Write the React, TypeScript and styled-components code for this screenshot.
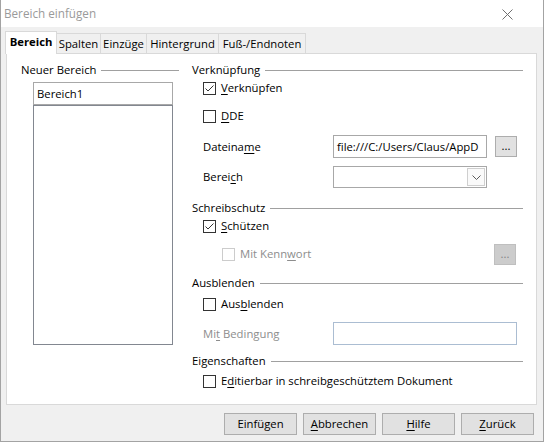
import React from "react";
import styled, { createGlobalStyle, css } from "styled-components";

const GlobalStyle = createGlobalStyle`
  html, body { margin: 0; padding: 0; background: #ffffff; }
  body {
    font-family: "Segoe UI", "Open Sans", sans-serif;
    font-size: 11.3px;
    color: #000;
  }
  * { box-sizing: border-box; }
`;

const Window = styled.div`
  width: 544px;
  height: 442px;
  border-left: 1px solid #a3a3a3;
  border-right: 1px solid #a3a3a3;
  border-bottom: 1px solid #a3a3a3;
  display: flex;
  flex-direction: column;
  background: #fff;
`;

const TitleBar = styled.div`
  height: 27px;
  display: flex;
  align-items: flex-start;
  justify-content: space-between;
  padding: 5px 30px 0 3px;
  background: #fff;
`;

const TitleText = styled.span`
  font-size: 11.7px;
  line-height: 16px;
  color: #9a9a9a;
`;

const CloseIcon = styled.svg`
  margin-top: 4px;
  display: block;
`;

const Body = styled.div`
  flex: 1;
  background: #f0f0f0;
  padding: 4px 0 0 5px;
  display: flex;
  flex-direction: column;
`;

const TabBar = styled.div`
  display: flex;
  align-items: flex-end;
  height: 23px;
  margin-left: -1px;
  margin-bottom: -1px;
  position: relative;
  z-index: 1;
`;

const Tab = styled.div<{ $active?: boolean; $w: number }>`
  width: ${(p) => p.$w}px;
  height: ${(p) => (p.$active ? 23 : 21)}px;
  margin-left: -1px;
  &:first-child { margin-left: 0; }
  display: flex;
  align-items: center;
  justify-content: center;
  border: 1px solid #d9d9d9;
  line-height: 16px;
  white-space: nowrap;
  ${(p) =>
    p.$active
      ? css`
          background: #fff;
          border-bottom: none;
          font-weight: bold;
          padding-bottom: 2px;
          position: relative;
          z-index: 2;
        `
      : css`
          background: #f0f0f0;
          padding-top: 1px;
        `}
`;

const Pane = styled.div`
  width: 531px;
  height: 352px;
  border: 1px solid #d9d9d9;
  background: #fff;
  display: flex;
  padding: 8px 0 0 14px;
`;

const LeftColumn = styled.div`
  width: 158px;
  display: flex;
  flex-direction: column;
`;

const RightColumn = styled.div`
  width: 331px;
  margin-left: 13px;
  display: flex;
  flex-direction: column;
`;

const SectionHeader = styled.div<{ $mt?: number }>`
  height: 16px;
  margin-top: ${(p) => p.$mt ?? 0}px;
  display: flex;
  align-items: center;
  gap: 5px;
  white-space: nowrap;
  line-height: 16px;
`;

const HeaderLine = styled.div`
  flex: 1;
  height: 1px;
  background: #a0a0a0;
`;

const NameInput = styled.div`
  margin: 4px 0 0 12px;
  width: 140px;
  height: 23px;
  border: 1px solid #a8a8a8;
  padding: 0 3px;
  display: flex;
  align-items: center;
  line-height: 16px;
`;

const ListBox = styled.div`
  margin-left: 12px;
  width: 140px;
  height: 240px;
  border: 1px solid #828790;
  background: #fff;
`;

const CheckRow = styled.div<{ $mt?: number; $indent?: number; $h?: number; $pr?: number }>`
  height: ${(p) => p.$h ?? 16}px;
  margin-top: ${(p) => p.$mt ?? 0}px;
  padding-left: ${(p) => p.$indent ?? 11}px;
  padding-right: ${(p) => p.$pr ?? 0}px;
  display: flex;
  align-items: center;
  line-height: 16px;
  white-space: nowrap;
`;

const Box = styled.span<{ $disabled?: boolean }>`
  width: 13px;
  height: 13px;
  border: 1px solid ${(p) => (p.$disabled ? "#cccccc" : "#333333")};
  background: #fff;
  display: inline-flex;
  align-items: center;
  justify-content: center;
  flex: none;
  margin-right: 5px;
`;

const Label = styled.span<{ $disabled?: boolean; $w?: number }>`
  color: ${(p) => (p.$disabled ? "#8d8d8d" : "#000")};
  ${(p) => (p.$w ? `width: ${p.$w}px; flex: none;` : "")}
`;

const Mn = styled.span`
  text-decoration: underline;
  text-underline-offset: 2px;
`;

const FieldRow = styled.div<{ $mt?: number; $h: number }>`
  height: ${(p) => p.$h}px;
  margin-top: ${(p) => p.$mt ?? 0}px;
  padding-left: 11px;
  display: flex;
  align-items: center;
  line-height: 16px;
  white-space: nowrap;
`;

const TextField = styled.div<{ $w: number; $h: number; $tone?: "normal" | "disabled" }>`
  width: ${(p) => p.$w}px;
  height: ${(p) => p.$h}px;
  border: 1px solid ${(p) => (p.$tone === "disabled" ? "#abbdd2" : "#a8a8a8")};
  background: #fff;
  padding: 0 3px;
  display: flex;
  align-items: center;
  overflow: hidden;
  white-space: nowrap;
  flex: none;
`;

const Select = styled.div`
  width: 154px;
  height: 22px;
  border: 1px solid #a8a8a8;
  background: #fff;
  display: flex;
  justify-content: flex-end;
  align-items: center;
  padding-right: 1px;
  flex: none;
`;

const SelectArrow = styled.div`
  width: 18px;
  height: 18px;
  border: 1px solid #cfcfcf;
  background: #fafafa;
  display: flex;
  align-items: center;
  justify-content: center;
`;

const SmallButton = styled.div<{ $disabled?: boolean; $ml?: number }>`
  width: 22px;
  height: 21px;
  margin-left: ${(p) => p.$ml ?? 0}px;
  border: 1px solid ${(p) => (p.$disabled ? "#bfbfbf" : "#adadad")};
  background: ${(p) => (p.$disabled ? "#cccccc" : "#e1e1e1")};
  color: ${(p) => (p.$disabled ? "#838383" : "#000")};
  display: flex;
  align-items: center;
  justify-content: center;
  padding-bottom: 1px;
  line-height: 16px;
  flex: none;
`;

const Spacer = styled.div`
  flex: 1;
`;

const ButtonRow = styled.div`
  display: flex;
  justify-content: flex-end;
  gap: 6px;
  margin-top: 8px;
  padding-right: 9px;
`;

const DialogButton = styled.div`
  width: 73px;
  height: 22px;
  border: 1px solid #adadad;
  background: #e1e1e1;
  display: flex;
  align-items: center;
  justify-content: center;
  line-height: 16px;
`;

const Check = () => (
  <svg width="11" height="11" viewBox="0 0 11 11">
    <polyline points="1.5,5.5 4,8 9.5,2.5" fill="none" stroke="#333" strokeWidth="1" />
  </svg>
);

const CheckBox: React.FC<{ checked?: boolean; disabled?: boolean }> = ({ checked, disabled }) => (
  <Box $disabled={disabled}>{checked && <Check />}</Box>
);

export default function App() {
  return (
    <>
      <GlobalStyle />
      <Window>
        <TitleBar>
          <TitleText>Bereich einfügen</TitleText>
          <CloseIcon width="11" height="11" viewBox="0 0 11 11">
            <line x1="0.5" y1="0.5" x2="10.5" y2="10.5" stroke="#6f6f6f" strokeWidth="1" />
            <line x1="10.5" y1="0.5" x2="0.5" y2="10.5" stroke="#6f6f6f" strokeWidth="1" />
          </CloseIcon>
        </TitleBar>
        <Body>
          <TabBar>
            <Tab $active $w={52}>Bereich</Tab>
            <Tab $w={45}>Spalten</Tab>
            <Tab $w={47}>Einzüge</Tab>
            <Tab $w={73}>Hintergrund</Tab>
            <Tab $w={88}>Fuß-/Endnoten</Tab>
          </TabBar>
          <Pane>
            <LeftColumn>
              <SectionHeader>
                <span>Neuer Bereich</span>
                <HeaderLine />
              </SectionHeader>
              <NameInput>Bereich1</NameInput>
              <ListBox />
            </LeftColumn>
            <RightColumn>
              <SectionHeader>
                <span>Verknüpfung</span>
                <HeaderLine />
              </SectionHeader>
              <CheckRow $mt={2}>
                <CheckBox checked />
                <Label>
                  <Mn>V</Mn>erknüpfen
                </Label>
              </CheckRow>
              <CheckRow $mt={12}>
                <CheckBox />
                <Label>
                  <Mn>D</Mn>DE
                </Label>
              </CheckRow>
              <FieldRow $mt={11} $h={23}>
                <Label $w={130}>
                  Dateina<Mn>m</Mn>e
                </Label>
                <TextField $w={154} $h={23}>file:///C:/Users/Claus/AppD</TextField>
                <SmallButton $ml={8}>...</SmallButton>
              </FieldRow>
              <FieldRow $mt={8} $h={22}>
                <Label $w={130}>
                  Berei<Mn>c</Mn>h
                </Label>
                <Select>
                  <SelectArrow>
                    <svg width="9" height="5" viewBox="0 0 9 5">
                      <polyline points="0.5,0.5 4.5,4.5 8.5,0.5" fill="none" stroke="#5a5a5a" strokeWidth="1" />
                    </svg>
                  </SelectArrow>
                </Select>
              </FieldRow>
              <SectionHeader $mt={12}>
                <span>Schreibschutz</span>
                <HeaderLine />
              </SectionHeader>
              <CheckRow $mt={2}>
                <CheckBox checked />
                <Label>
                  <Mn>S</Mn>chützen
                </Label>
              </CheckRow>
              <CheckRow $mt={9} $indent={30} $h={22} $pr={7}>
                <CheckBox disabled />
                <Label $disabled>
                  Mit Kenn<Mn>w</Mn>ort
                </Label>
                <Spacer />
                <SmallButton $disabled>...</SmallButton>
              </CheckRow>
              <SectionHeader $mt={10}>
                <span>Ausblenden</span>
                <HeaderLine />
              </SectionHeader>
              <CheckRow $mt={5}>
                <CheckBox />
                <Label>
                  Aus<Mn>b</Mn>lenden
                </Label>
              </CheckRow>
              <FieldRow $mt={10} $h={23}>
                <Label $w={130} $disabled>
                  Mi<Mn>t</Mn> Bedingung
                </Label>
                <TextField $w={184} $h={23} $tone="disabled" />
              </FieldRow>
              <SectionHeader $mt={8}>
                <span>Eigenschaften</span>
                <HeaderLine />
              </SectionHeader>
              <CheckRow $mt={4}>
                <CheckBox />
                <Label>
                  E<Mn>d</Mn>itierbar in schreibgeschütztem Dokument
                </Label>
              </CheckRow>
            </RightColumn>
          </Pane>
          <ButtonRow>
            <DialogButton>Einfügen</DialogButton>
            <DialogButton>
              <Mn>A</Mn>bbrechen
            </DialogButton>
            <DialogButton>
              <Mn>H</Mn>ilfe
            </DialogButton>
            <DialogButton>
              <Mn>Z</Mn>urück
            </DialogButton>
          </ButtonRow>
        </Body>
      </Window>
    </>
  );
}
